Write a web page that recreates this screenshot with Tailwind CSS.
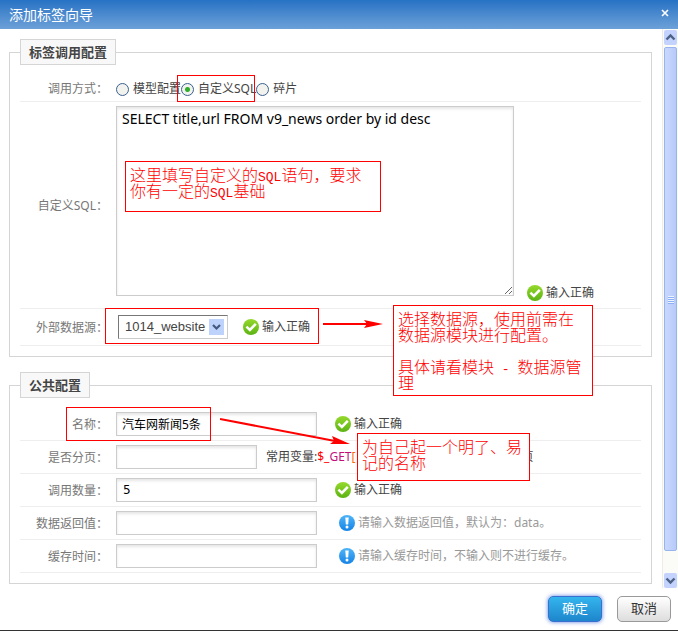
<!DOCTYPE html>
<html lang="zh-CN">
<head>
  <meta charset="UTF-8" />
  <meta name="viewport" content="width=device-width, initial-scale=1.0" />
  <title>添加标签向导</title>
  <script src="https://cdn.jsdelivr.net/npm/@tailwindcss/browser@4"></script>
</head>

<body class="bg-white text-xs text-[#444] font-['Noto_Sans','Noto_Sans_CJK_SC',sans-serif]">

  <!-- Shared icons -->
  <svg class="absolute size-0">
    <defs>
      <linearGradient id="green" x1="0" y1="0" x2="0" y2="1">
        <stop offset="0" stop-color="#96d92c" /><stop offset="1" stop-color="#5bb312" />
      </linearGradient>
      <linearGradient id="blue" x1="0" y1="0" x2="0" y2="1">
        <stop offset="0" stop-color="#4fb4f7" /><stop offset="1" stop-color="#1583e6" />
      </linearGradient>
    </defs>
    <symbol id="ok" viewBox="0 0 16 16">
      <circle cx="8" cy="8" r="8" fill="url(#green)" />
      <path d="M3.4 7.6 6.9 10.900 12.800 4.800" fill="none" stroke="#fff" stroke-width="2.600" />
    </symbol>
    <symbol id="tip" viewBox="0 0 16 16">
      <circle cx="8" cy="8" r="8" fill="url(#blue)" />
      <path d="M6.300 2.600h3.400L9.200 9.600H6.800z" fill="#fff" />
      <circle cx="8" cy="12" r="1.500" fill="#fff" />
    </symbol>
  </svg>

  <!-- Title bar -->
  <header class="flex h-[29px] items-center justify-between bg-linear-to-b from-[#2672c4] to-[#6ca1d8] pl-[9px] pr-2 text-white">
    <h1 class="text-sm">添加标签向导</h1>
    <button type="button" aria-label="关闭" class="flex size-[10px] items-center justify-center">
      <svg viewBox="0 0 8 8" class="size-2 -mt-1"><path d="M1 1l6 6M7 1L1 7" stroke="#fff" stroke-width="1.6" /></svg>
    </button>
  </header>

  <div class="flex">
    <form id="wizard" class="min-w-0 flex-1 pt-[10px] pr-[10px] pb-1 pl-[9px]">

      <!-- Tag call settings -->
      <fieldset class="border border-[#d5d5d5] px-[10px] pb-[10px]">
        <legend class="mb-[10px] h-[26px] border border-[#d5d5d5] bg-[#f8f8f8] px-2 text-[13px] leading-6 font-bold">标签调用配置</legend>

        <div class="relative flex h-[27px] items-center border-b border-[#eee]">
          <span class="w-[88px] pt-[2px] text-right text-[#777]">调用方式：</span>
          <div class="ml-2 flex items-center pt-[2px]">
            <label class="flex items-center gap-1"><input type="radio" name="mode" class="size-[13px] appearance-none rounded-full border border-[#39618f] bg-[#f2f2ee]" />模型配置</label>
            <label class="flex items-center gap-1"><input type="radio" name="mode" checked class="size-[13px] appearance-none rounded-full border border-[#39618f] bg-[#f2f2ee] bg-[radial-gradient(circle,#2fae2b_0_2px,transparent_3px)]" />自定义SQL</label>
            <label class="flex items-center gap-1"><input type="radio" name="mode" class="size-[13px] appearance-none rounded-full border border-[#39618f] bg-[#f2f2ee]" />碎片</label>
          </div>
          <div class="absolute top-0 left-[157px] h-[27px] w-[78px] border border-[#f00]"></div>
        </div>

        <div class="relative flex items-center border-b border-[#eee] pt-1 pb-3">
          <label for="sql" class="w-[88px] pt-[10px] text-right text-[#777]">自定义SQL：</label>
          <textarea id="sql" class="ml-2 h-[190px] w-[398px] border border-[#ccc] px-[5px] py-1 font-['Noto_Sans',sans-serif] text-sm leading-4 text-black shadow-[inset_0_2px_3px_#e6e6e6]">SELECT title,url FROM v9_news order by id desc</textarea>
          <span class="-mb-[5px] ml-[13px] flex items-center gap-[3px] self-end"><svg class="size-4"><use href="#ok" /></svg>输入正确</span>
          <p class="absolute top-[59px] left-[105px] h-[51px] w-[256px] border border-[#f00] pt-1 pl-1 font-['Noto_Sans_CJK_SC',sans-serif] text-base leading-4 font-light text-[#f00]">这里填写自定义的<span class="font-['Liberation_Mono',monospace] text-[13px] leading-0">SQL</span>语句，要求<br />你有一定的<span class="font-['Liberation_Mono',monospace] text-[13px] leading-0">SQL</span>基础</p>
        </div>

        <div class="relative flex h-[37px] items-center border-b border-[#eee]">
          <label for="source" class="w-[88px] pt-[2px] text-right text-[#777]">外部数据源：</label>
          <div class="relative ml-[10px]">
            <select id="source" class="block h-6 w-[110px] appearance-none border border-t-[#777] border-r-[#ccc] border-b-[#ccc] border-l-[#777] pl-[6px] font-['Liberation_Sans',sans-serif] text-[13px]">
              <option>1014_website</option>
            </select>
            <svg viewBox="0 0 15 16" class="pointer-events-none absolute top-1 right-1 h-4 w-[15px] bg-[#bdd3fb]"><path d="M4 6l3.500 3.500L11 6" fill="none" stroke="#43597f" stroke-width="2.200" /></svg>
          </div>
          <span class="ml-[15px] flex items-center gap-[3px]"><svg class="size-4"><use href="#ok" /></svg>输入正确</span>
          <div class="absolute -top-px left-[85px] h-9 w-[214px] border border-[#f00]"></div>
          <svg viewBox="0 0 60 12" class="absolute top-[9px] left-[303px] h-3 w-[60px]"><path d="M0 6h44" stroke="#f00" stroke-width="2" /><path d="M41 2l19 4-19 4 3-4z" fill="#f00" /></svg>
          <p class="absolute -top-1 left-[373px] z-10 h-[91px] w-[200px] border border-[#f00] bg-white pt-1 pl-1 font-['Noto_Sans_CJK_SC',sans-serif] text-base leading-4 font-light text-[#f00]">选择数据源，使用前需在<br />数据源模块进行配置。<br /><br />具体请看模块<span class="font-['Liberation_Mono',monospace] text-[13px] leading-0"> - </span>数据源管<br />理</p>
        </div>
      </fieldset>

      <!-- Common settings -->
      <fieldset class="mt-[15px] border border-[#d5d5d5] px-[10px] pb-[10px]">
        <legend class="mb-[10px] h-[26px] border border-[#d5d5d5] bg-[#f8f8f8] px-2 text-[13px] leading-6 font-bold">公共配置</legend>

        <div class="relative flex h-[33px] items-center border-b border-[#eee]">
          <label for="name" class="w-[88px] pt-[2px] text-right text-[#777]">名称：</label>
          <input id="name" type="text" value="汽车网新闻5条" class="ml-2 h-6 w-[201px] border border-[#ccc] px-[5px] text-black shadow-[inset_0_2px_3px_#e6e6e6]" />
          <span class="ml-[18px] flex items-center gap-[3px]"><svg class="size-4"><use href="#ok" /></svg>输入正确</span>
          <div class="absolute -top-px left-[46px] h-[34px] w-[145px] border border-[#f00]"></div>
          <svg viewBox="0 0 132 30" class="absolute top-[9px] left-[200px] z-10 h-[30px] w-[132px]"><path d="M0 2l115 22" stroke="#f00" stroke-width="2" /><path d="M112 19l18 8-20 0 4-3z" fill="#f00" /></svg>
          <p class="absolute top-[25px] left-[337px] z-10 h-12 w-[173px] border border-[#f00] bg-white pt-1 pl-1 font-['Noto_Sans_CJK_SC',sans-serif] text-base leading-4 font-light text-[#f00]">为自己起一个明了、易<br />记的名称</p>
        </div>

        <div class="flex h-[33px] items-center border-b border-[#eee]">
          <label for="page" class="w-[88px] pt-[2px] text-right text-[#777]">是否分页：</label>
          <input id="page" type="text" class="ml-2 h-6 w-[141px] border border-[#ccc] px-[5px] text-black shadow-[inset_0_2px_3px_#e6e6e6]" />
          <span class="ml-[9px] whitespace-nowrap">常用变量:<span class="text-[#f00]">$_</span><span class="text-[#c0107a]">GET</span><span class="text-[#f60]">[</span></span>
          <span class="ml-[166px]">页</span>
        </div>

        <div class="flex h-[33px] items-center border-b border-[#eee]">
          <label for="count" class="w-[88px] pt-[2px] text-right text-[#777]">调用数量：</label>
          <input id="count" type="text" value="5" class="ml-2 h-6 w-[201px] border border-[#ccc] px-[6px] font-['DejaVu_Sans',sans-serif] text-black shadow-[inset_0_2px_3px_#e6e6e6]" />
          <span class="ml-[18px] flex items-center gap-[3px]"><svg class="size-4"><use href="#ok" /></svg>输入正确</span>
        </div>

        <div class="flex h-[33px] items-center border-b border-[#eee]">
          <label for="returns" class="w-[88px] pt-[2px] text-right text-[#777]">数据返回值：</label>
          <input id="returns" type="text" class="ml-2 h-6 w-[201px] border border-[#ccc] px-[5px] text-black shadow-[inset_0_2px_3px_#e6e6e6]" />
          <span class="ml-[22px] flex items-center gap-[3px] text-[#999]"><svg class="size-4"><use href="#tip" /></svg>请输入数据返回值，默认为：data。</span>
        </div>

        <div class="flex h-[33px] items-center border-b border-[#eee]">
          <label for="cache" class="w-[88px] pt-[2px] text-right text-[#777]">缓存时间：</label>
          <input id="cache" type="text" class="ml-2 h-6 w-[201px] border border-[#ccc] px-[5px] text-black shadow-[inset_0_2px_3px_#e6e6e6]" />
          <span class="ml-[22px] flex items-center gap-[3px] text-[#999]"><svg class="size-4"><use href="#tip" /></svg>请输入缓存时间，不输入则不进行缓存。</span>
        </div>
      </fieldset>
    </form>

    <!-- Scrollbar -->
    <div class="flex w-4 flex-col border-l border-[#eeede5] bg-[#fbfbf8] px-px pt-px" aria-hidden="true">
      <svg viewBox="0 0 13 15" class="h-[15px] rounded-xs bg-[#c3d3fd]"><path d="M2.500 9.500l4-4 4 4" fill="none" stroke="#4d6185" stroke-width="2.400" /></svg>
      <div class="mt-[2px] mb-[22px] flex flex-1 flex-col items-center justify-center gap-px rounded-xs border border-[#98b4ee] bg-linear-to-r from-[#cad8ff] to-[#b7caf8]">
        <i class="h-px w-[6px] bg-[#eef4fe] shadow-[0_1px_#8cb0f8]"></i>
        <i class="h-px w-[6px] bg-[#eef4fe] shadow-[0_1px_#8cb0f8]"></i>
        <i class="h-px w-[6px] bg-[#eef4fe] shadow-[0_1px_#8cb0f8]"></i>
        <i class="h-px w-[6px] bg-[#eef4fe] shadow-[0_1px_#8cb0f8]"></i>
      </div>
      <svg viewBox="0 0 13 15" class="h-[15px] rounded-xs bg-[#c3d3fd]"><path d="M2.500 5.500l4 4 4-4" fill="none" stroke="#4d6185" stroke-width="2.400" /></svg>
    </div>
  </div>

  <!-- Actions -->
  <footer class="flex h-[43px] justify-end gap-[15px] border-b border-[#333] pt-2 pr-[7px]">
    <button type="submit" form="wizard" class="h-[26px] w-[54px] rounded-[5px] border border-[#3a6fd0] bg-linear-to-b from-[#34b5ee] to-[#1e86cc] text-[13px] text-white shadow-[0_0_4px_#5a7fe0]">确定</button>
    <button type="button" class="h-[26px] w-[54px] rounded-[5px] border border-[#999] bg-linear-to-b from-white to-[#ddd] text-[13px] text-[#333]">取消</button>
  </footer>
</body>
</html>
